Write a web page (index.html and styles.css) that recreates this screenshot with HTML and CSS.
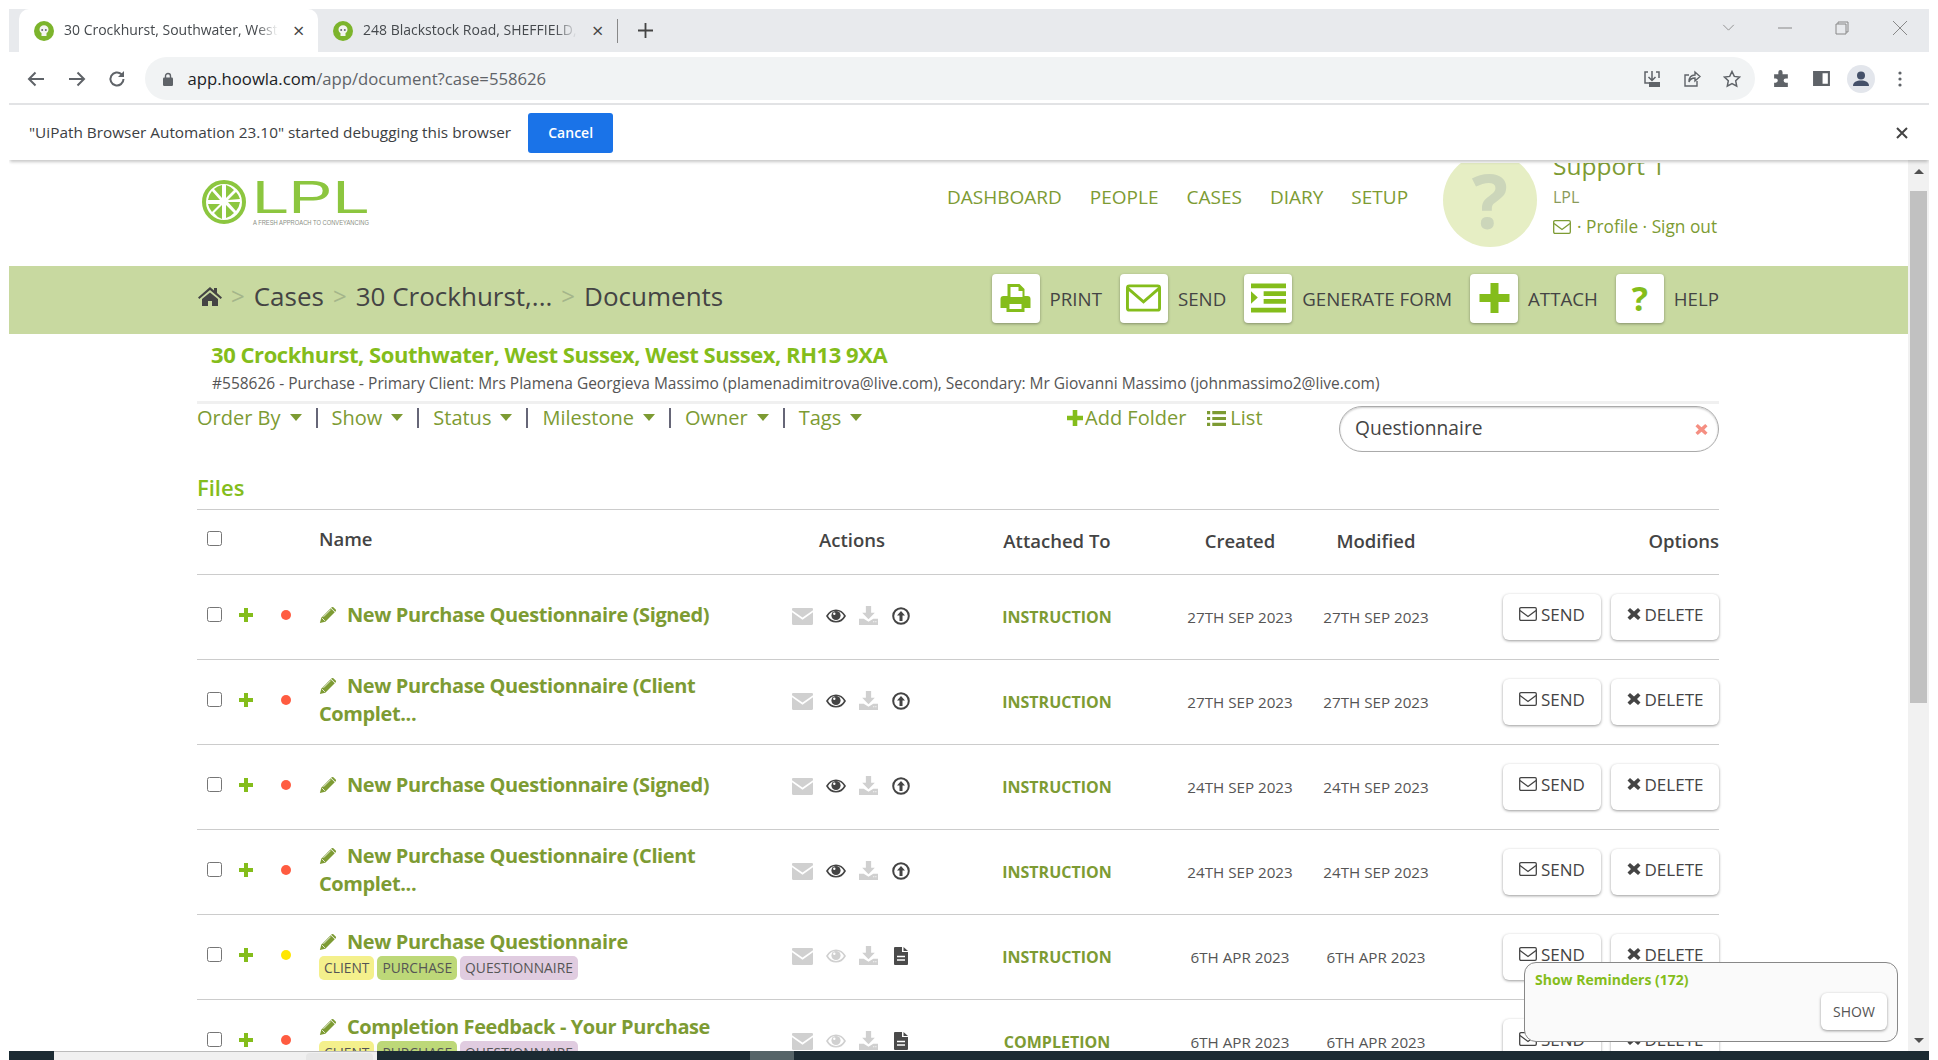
FILE: index.html
```html
<!DOCTYPE html>
<html lang="en">
<head>
<meta charset="utf-8">
<title>Documents</title>
<link rel="stylesheet" href="styles.css">
</head>
<body>
<svg class="defs" width="0" height="0" aria-hidden="true">
  <symbol id="fav" viewBox="0 0 20 20"><circle cx="10" cy="10" r="10" fill="#7cb42c"/><path d="M5.5 8.5a4.5 4.2 0 0 1 9 0c0 2-1 3-2 3.500V15H7.500v-3C6.500 11.500 5.500 10.500 5.500 8.500z" fill="#f4f4f0"/><circle cx="8.200" cy="9" r="1" fill="#667"/><circle cx="11.800" cy="9" r="1" fill="#667"/></symbol>
  <symbol id="pencil" viewBox="0 0 20 20"><path d="M1 19l1.500-6L13 2.500l4.500 4.500L7 17.500z" fill="#7d9b33"/><path d="M14 1.500a1.500 1.500 0 0 1 2 0l2.500 2.500a1.500 1.500 0 0 1 0 2L18 6.500 13.500 2z" fill="#7d9b33"/><path d="M3.500 13.500l3 3M5 12l8-8" stroke="#fff" stroke-width=".9" fill="none"/></symbol>
  <symbol id="plus" viewBox="0 0 14 14"><path d="M5 0h4v5h5v4H9v5H5V9H0V5h5z" fill="#84bd1b"/></symbol>
  <symbol id="mail" viewBox="0 0 20 16"><path d="M1 0h18a1 1 0 0 1 1 1v1l-10 7L0 2V1a1 1 0 0 1 1-1zM0 4l10 7 10-7v11a1 1 0 0 1-1 1H1a1 1 0 0 1-1-1z" fill="#d0d0d0"/></symbol>
  <symbol id="eye" viewBox="0 0 20 14"><path d="M1 7c2-3.500 5.300-5.800 9-5.800S17 3.500 19 7c-2 3.500-5.300 5.800-9 5.800S3 10.500 1 7z" fill="none" stroke="currentColor" stroke-width="1.600"/><circle cx="10" cy="6.500" r="4.600" fill="currentColor"/><circle cx="8.300" cy="4.800" r="1.200" fill="#fff"/></symbol>
  <symbol id="dl" viewBox="0 0 18 18"><path d="M6.500 0h5v6.500H15L9 12.500 3 6.500h3.500zM0 12h4.500L9 15l4.500-3H18v6H0z" fill="#d0d0d0"/><path d="M13.500 15h1M15.500 15h1" stroke="#fff"/></symbol>
  <symbol id="up" viewBox="0 0 18 18"><circle cx="9" cy="9" r="7.800" fill="none" stroke="#444" stroke-width="2"/><path d="M9 4l4 4.500h-2.500V14h-3V8.500H5z" fill="#444"/></symbol>
  <symbol id="file" viewBox="0 0 14 18"><path d="M0 1a1 1 0 0 1 1-1h7v5h6v12a1 1 0 0 1-1 1H1a1 1 0 0 1-1-1zM9.500 0L14 4H9.500z" fill="#4a4a4a"/><path d="M3 9.500h8M3 13h8" stroke="#fff" stroke-width="1.500"/></symbol>
  <symbol id="send-o" viewBox="0 0 18 14"><rect x=".7" y=".7" width="16.600" height="12.600" rx="1.200" fill="none" stroke="currentColor" stroke-width="1.300"/><path d="M1 3.500l8 6 8-6" fill="none" stroke="currentColor" stroke-width="1.300"/></symbol>
  <symbol id="cross" viewBox="0 0 14 14"><path d="M3 1l4 3.500L11 1l2.500 2.500L10 7l3.500 3.500L11 13 7 9.500 3 13 .5 10.500 4 7 .5 3.500z" fill="currentColor"/></symbol>
</svg>

<div class="window">
  <div class="tabstrip">
    <div class="tab tab-active"><svg class="fav"><use href="#fav"/></svg><span class="tab-label">30 Crockhurst, Southwater, West</span><span class="tab-x">×</span></div>
    <div class="tab tab-idle"><svg class="fav"><use href="#fav"/></svg><span class="tab-label">248 Blackstock Road, SHEFFIELD,</span><span class="tab-x">×</span></div>
    <span class="tab-sep"></span>
    <svg class="newtab" viewBox="0 0 14 14"><path d="M7 0v14M0 7h14" stroke="#444" stroke-width="1.700"/></svg>
    <div class="winctl">
      <svg class="wc-chev" viewBox="0 0 14 8"><path d="M1 1l6 6 6-6" fill="none" stroke="#888" stroke-width="1"/></svg>
      <svg class="wc-min" viewBox="0 0 14 2"><path d="M0 1h14" stroke="#888"/></svg>
      <svg class="wc-max" viewBox="0 0 14 14"><path d="M3 3V1h10v10h-2M1 3h10v10H1z" fill="none" stroke="#888"/></svg>
      <svg class="wc-close" viewBox="0 0 14 14"><path d="M0 0l14 14M14 0L0 14" stroke="#888"/></svg>
    </div>
  </div>

  <div class="toolbar">
    <svg class="nav-ico" viewBox="0 0 18 18"><path d="M17 9H2M8.500 2.500L2 9l6.500 6.500" fill="none" stroke="#5f6368" stroke-width="2"/></svg>
    <svg class="nav-ico" viewBox="0 0 18 18"><path d="M1 9h15M9.500 2.500L16 9l-6.500 6.500" fill="none" stroke="#5f6368" stroke-width="2"/></svg>
    <svg class="nav-ico" viewBox="0 0 18 18"><path d="M15.500 9a6.500 6.500 0 1 1-2-4.700" fill="none" stroke="#5f6368" stroke-width="2"/><path d="M16 1v6h-6z" fill="#5f6368"/></svg>
    <div class="omnibox">
      <svg class="lock" viewBox="0 0 10 14"><path d="M2.500 6V4a2.500 2.500 0 0 1 5 0v2" fill="none" stroke="#5f6368" stroke-width="1.400"/><rect y="5.500" width="10" height="8.500" rx="1.200" fill="#5f6368"/></svg>
      <span class="url"><b>app.hoowla.com</b>/app/document?case=558626</span>
      <svg class="omni-ico omni-first" viewBox="0 0 18 18"><path d="M5 2H2v11h5M13 2h3v6M9 1v9M5.500 7L9 10.500 12.500 7" fill="none" stroke="#5f6368" stroke-width="1.500"/><rect x="6" y="12" width="11" height="5" fill="#5f6368"/></svg>
      <svg class="omni-ico" viewBox="0 0 18 18"><path d="M14 11v5H2V5h4M6 12c0-5 3-7 6-7V2l5 4.500L12 11V8c-3 0-5 1-6 4z" fill="none" stroke="#5f6368" stroke-width="1.400"/></svg>
      <svg class="omni-ico" viewBox="0 0 18 18"><path d="M9 1.500l2.300 4.900 5.200.7-3.800 3.700 1 5.300L9 13.500l-4.700 2.600 1-5.300L1.500 7.100l5.200-.7z" fill="none" stroke="#5f6368" stroke-width="1.500"/></svg>
    </div>
    <div class="ext">
      <svg class="ext-ico" viewBox="0 0 18 18"><path d="M2 5h4V3a2 2 0 0 1 4 0v2h5v4h-2a2 2 0 0 0 0 4h2v4H2v-4h1.500a2 2 0 0 0 0-4H2z" fill="#5f6368"/></svg>
      <svg class="ext-ico" viewBox="0 0 18 18"><path d="M1 2h16v14H1zM10 4v10h5V4z" fill="#5f6368" fill-rule="evenodd"/></svg>
      <svg class="profile-ico" viewBox="0 0 28 28"><circle cx="14" cy="14" r="14" fill="#e3e6ec"/><circle cx="14" cy="10.500" r="4" fill="#445069"/><path d="M6 21c0-4 3.500-5.500 8-5.500s8 1.500 8 5.500z" fill="#445069"/></svg>
      <svg class="kebab" viewBox="0 0 4 16"><circle cx="2" cy="2" r="1.600" fill="#5f6368"/><circle cx="2" cy="8" r="1.600" fill="#5f6368"/><circle cx="2" cy="14" r="1.600" fill="#5f6368"/></svg>
    </div>
  </div>

  <div class="infobar">
    <span class="info-text">"UiPath Browser Automation 23.10" started debugging this browser</span>
    <span class="info-btn">Cancel</span>
    <svg class="info-x" viewBox="0 0 12 12"><path d="M1 1l10 10M11 1L1 11" stroke="#444" stroke-width="2"/></svg>
  </div>

  <div class="viewport">
    <div class="page">
      <header class="site-head">
        <div class="container head-row">
          <svg class="logo" viewBox="0 0 175 56">
            <circle cx="25" cy="26" r="20" fill="#fff" stroke="#8cc63f" stroke-width="4"/>
            <g fill="#8cc63f">
              <path d="M27 9l0 13 8-8a17 17 0 0 0-8-5zM37 16l-8 8 12-1a17 17 0 0 0-4-7zM41 26l-12 0 8 9a17 17 0 0 0 4-9zM35 37l-8-8v13a17 17 0 0 0 8-5zM23 43V29l-8 8a17 17 0 0 0 8 6zM13 36l8-8H9a17 17 0 0 0 4 8zM9 24h12l-8-9a17 17 0 0 0-4 9zM15 13l8 9V9a17 17 0 0 0-8 4z"/>
            </g>
            <text x="53" y="37" class="logo-word" textLength="117" lengthAdjust="spacingAndGlyphs">LPL</text>
            <text x="54" y="49" class="logo-tag" textLength="116" lengthAdjust="spacingAndGlyphs">A FRESH APPROACH TO CONVEYANCING</text>
          </svg>
          <nav class="main-nav"><a>DASHBOARD</a><a>PEOPLE</a><a>CASES</a><a>DIARY</a><a>SETUP</a></nav>
          <div class="avatar">?</div>
          <div class="profile">
            <div class="profile-name">Support 1</div>
            <div class="profile-org">LPL</div>
            <div class="profile-links"><svg class="prof-mail"><use href="#send-o"/></svg> · Profile · Sign out</div>
          </div>
        </div>
      </header>

      <div class="band">
        <div class="container band-row">
          <div class="crumbs">
            <svg class="home" viewBox="0 0 24 20"><path d="M12 1l4 3.500V2h3v5l5 4.500-1.300 1.500L12 4 1.300 13 0 11.500zM4 13l8-6.500 8 6.500v7h-6v-5h-4v5H4z" fill="#444"/></svg>
            <span class="crumb-sep">&gt;</span><span>Cases</span><span class="crumb-sep">&gt;</span><span>30 Crockhurst,...</span><span class="crumb-sep">&gt;</span><span>Documents</span>
          </div>
          <div class="tools">
            <span class="tool"><span class="tool-btn"><svg viewBox="0 0 30 30"><path d="M7 1h12l5 5v7h3a3 3 0 0 1 3 3v9h-6v4H6v-4H0v-9a3 3 0 0 1 3-3h4z" fill="#84bd1b"/><path d="M10 4h8v4h4v6H10zM9 21h12v5H9z" fill="#fff"/></svg></span>PRINT</span>
            <span class="tool"><span class="tool-btn"><svg viewBox="0 0 36 28"><rect x="1.500" y="1.500" width="33" height="25" rx="2" fill="none" stroke="#84bd1b" stroke-width="3"/><path d="M2 4l16 14L34 4" fill="none" stroke="#84bd1b" stroke-width="3"/></svg></span>SEND</span>
            <span class="tool"><span class="tool-btn"><svg viewBox="0 0 36 30"><path d="M0 0h36v5H0zM13 8h23v5H13zM13 16h23v5H13zM0 25h36v5H0zM0 8l7 6.500L0 21z" fill="#84bd1b"/></svg></span>GENERATE FORM</span>
            <span class="tool"><span class="tool-btn"><svg viewBox="0 0 30 30"><path d="M11 0h8v11h11v8H19v11h-8V19H0v-8h11z" fill="#84bd1b"/></svg></span>ATTACH</span>
            <span class="tool"><span class="tool-btn tool-help">?</span>HELP</span>
          </div>
        </div>
      </div>

      <div class="case-head">
        <h1 class="case-title">30 Crockhurst, Southwater, West Sussex, West Sussex, RH13 9XA</h1>
        <p class="case-sub">#558626 - Purchase - Primary Client: Mrs Plamena Georgieva Massimo (plamenadimitrova@live.com), Secondary: Mr Giovanni Massimo (johnmassimo2@live.com)</p>
      </div>

      <div class="container">
        <div class="filters">
          <div class="filter-list">
            <a>Order By<i class="caret"></i></a><span class="pipe"></span>
            <a>Show<i class="caret"></i></a><span class="pipe"></span>
            <a>Status<i class="caret"></i></a><span class="pipe"></span>
            <a>Milestone<i class="caret"></i></a><span class="pipe"></span>
            <a>Owner<i class="caret"></i></a><span class="pipe"></span>
            <a>Tags<i class="caret"></i></a>
          </div>
          <div class="filter-actions">
            <a><svg class="fa-plus"><use href="#plus"/></svg>Add Folder</a>
            <a><svg class="fa-list" viewBox="0 0 18 14"><path d="M0 0h3v3H0zM5 0h13v3H5zM0 5.500h3v3H0zM5 5.500h13v3H5zM0 11h3v3H0zM5 11h13v3H5z" fill="#7d9b33"/></svg>List</a>
          </div>
          <div class="search"><span class="search-text">Questionnaire</span><svg class="search-x"><use href="#cross"/></svg></div>
        </div>

        <h2 class="files-title">Files</h2>

        <div class="row row-head">
          <div class="c-sel"><span class="check"></span></div>
          <div class="c-name">Name</div>
          <div class="c-act">Actions</div>
          <div class="c-att">Attached To</div>
          <div class="c-date">Created</div>
          <div class="c-date">Modified</div>
          <div class="c-opt">Options</div>
        </div>

        <div class="row">
          <div class="c-sel"><span class="check"></span><svg class="r-plus"><use href="#plus"/></svg><span class="dot dot-red"></span></div>
          <div class="c-name"><div class="doc"><svg class="pen"><use href="#pencil"/></svg>New Purchase Questionnaire (Signed)</div></div>
          <div class="c-act"><svg class="a-mail"><use href="#mail"/></svg><svg class="a-eye"><use href="#eye"/></svg><svg class="a-dl"><use href="#dl"/></svg><svg class="a-up"><use href="#up"/></svg></div>
          <div class="c-att">INSTRUCTION</div>
          <div class="c-date">27TH SEP 2023</div>
          <div class="c-date">27TH SEP 2023</div>
          <div class="c-opt"><span class="btn btn-send"><svg><use href="#send-o"/></svg>SEND</span><span class="btn btn-del"><svg><use href="#cross"/></svg>DELETE</span></div>
        </div>

        <div class="row">
          <div class="c-sel"><span class="check"></span><svg class="r-plus"><use href="#plus"/></svg><span class="dot dot-red"></span></div>
          <div class="c-name"><div class="doc"><svg class="pen"><use href="#pencil"/></svg>New Purchase Questionnaire (Client Complet...</div></div>
          <div class="c-act"><svg class="a-mail"><use href="#mail"/></svg><svg class="a-eye"><use href="#eye"/></svg><svg class="a-dl"><use href="#dl"/></svg><svg class="a-up"><use href="#up"/></svg></div>
          <div class="c-att">INSTRUCTION</div>
          <div class="c-date">27TH SEP 2023</div>
          <div class="c-date">27TH SEP 2023</div>
          <div class="c-opt"><span class="btn btn-send"><svg><use href="#send-o"/></svg>SEND</span><span class="btn btn-del"><svg><use href="#cross"/></svg>DELETE</span></div>
        </div>

        <div class="row">
          <div class="c-sel"><span class="check"></span><svg class="r-plus"><use href="#plus"/></svg><span class="dot dot-red"></span></div>
          <div class="c-name"><div class="doc"><svg class="pen"><use href="#pencil"/></svg>New Purchase Questionnaire (Signed)</div></div>
          <div class="c-act"><svg class="a-mail"><use href="#mail"/></svg><svg class="a-eye"><use href="#eye"/></svg><svg class="a-dl"><use href="#dl"/></svg><svg class="a-up"><use href="#up"/></svg></div>
          <div class="c-att">INSTRUCTION</div>
          <div class="c-date">24TH SEP 2023</div>
          <div class="c-date">24TH SEP 2023</div>
          <div class="c-opt"><span class="btn btn-send"><svg><use href="#send-o"/></svg>SEND</span><span class="btn btn-del"><svg><use href="#cross"/></svg>DELETE</span></div>
        </div>

        <div class="row">
          <div class="c-sel"><span class="check"></span><svg class="r-plus"><use href="#plus"/></svg><span class="dot dot-red"></span></div>
          <div class="c-name"><div class="doc"><svg class="pen"><use href="#pencil"/></svg>New Purchase Questionnaire (Client Complet...</div></div>
          <div class="c-act"><svg class="a-mail"><use href="#mail"/></svg><svg class="a-eye"><use href="#eye"/></svg><svg class="a-dl"><use href="#dl"/></svg><svg class="a-up"><use href="#up"/></svg></div>
          <div class="c-att">INSTRUCTION</div>
          <div class="c-date">24TH SEP 2023</div>
          <div class="c-date">24TH SEP 2023</div>
          <div class="c-opt"><span class="btn btn-send"><svg><use href="#send-o"/></svg>SEND</span><span class="btn btn-del"><svg><use href="#cross"/></svg>DELETE</span></div>
        </div>

        <div class="row">
          <div class="c-sel"><span class="check"></span><svg class="r-plus"><use href="#plus"/></svg><span class="dot dot-yellow"></span></div>
          <div class="c-name"><div class="doc"><svg class="pen"><use href="#pencil"/></svg>New Purchase Questionnaire</div><div class="tags"><span class="tag tag-y">CLIENT</span><span class="tag tag-g">PURCHASE</span><span class="tag tag-p">QUESTIONNAIRE</span></div></div>
          <div class="c-act"><svg class="a-mail"><use href="#mail"/></svg><svg class="a-eye faded"><use href="#eye"/></svg><svg class="a-dl"><use href="#dl"/></svg><svg class="a-file"><use href="#file"/></svg></div>
          <div class="c-att">INSTRUCTION</div>
          <div class="c-date">6TH APR 2023</div>
          <div class="c-date">6TH APR 2023</div>
          <div class="c-opt"><span class="btn btn-send"><svg><use href="#send-o"/></svg>SEND</span><span class="btn btn-del"><svg><use href="#cross"/></svg>DELETE</span></div>
        </div>

        <div class="row">
          <div class="c-sel"><span class="check"></span><svg class="r-plus"><use href="#plus"/></svg><span class="dot dot-red"></span></div>
          <div class="c-name"><div class="doc"><svg class="pen"><use href="#pencil"/></svg>Completion Feedback - Your Purchase</div><div class="tags"><span class="tag tag-y">CLIENT</span><span class="tag tag-g">PURCHASE</span><span class="tag tag-p">QUESTIONNAIRE</span></div></div>
          <div class="c-act"><svg class="a-mail"><use href="#mail"/></svg><svg class="a-eye faded"><use href="#eye"/></svg><svg class="a-dl"><use href="#dl"/></svg><svg class="a-file"><use href="#file"/></svg></div>
          <div class="c-att">COMPLETION</div>
          <div class="c-date">6TH APR 2023</div>
          <div class="c-date">6TH APR 2023</div>
          <div class="c-opt"><span class="btn btn-send"><svg><use href="#send-o"/></svg>SEND</span><span class="btn btn-del"><svg><use href="#cross"/></svg>DELETE</span></div>
        </div>
      </div>
    </div>

    <div class="scrollbar">
      <i class="sb-up"></i>
      <div class="sb-thumb"></div>
      <i class="sb-down"></i>
    </div>

    <div class="reminders">
      <div class="rem-title">Show Reminders (172)</div>
      <span class="rem-btn">SHOW</span>
    </div>
  </div>

  <div class="taskbar">
    <div class="task-search"><span class="task-btn"></span></div>
    <div class="task-active"></div>
  </div>
</div>
</body>
</html>
```

FILE: styles.css
```css
* { box-sizing: border-box; }
html, body { margin: 0; padding: 0; height: 100%; overflow: hidden; background: #fff; }
body { font-family: "Open Sans", "Noto Sans", sans-serif; color: #444; }
.defs { position: absolute; }
a { color: inherit; text-decoration: none; }

.window { width: 1920px; height: 1060px; margin: 0 0 0 9px; padding-top: 9px; display: flex; flex-direction: column; }

/* browser chrome */
.tabstrip { height: 43px; flex: none; background: #e8eaed; display: flex; align-items: flex-end; padding-left: 10px; position: relative; }
.tab { height: 43px; display: flex; align-items: center; font-size: 14px; color: #45494d; white-space: nowrap; }
.tab-active { width: 299px; background: #fff; border-radius: 10px 10px 0 0; padding-left: 15px; }
.tab-idle { width: 300px; padding-left: 15px; height: 43px; }
.fav { width: 20px; height: 20px; flex: none; }
.tab-label { width: 214px; margin-left: 10px; margin-bottom: 2px; overflow: hidden; -webkit-mask-image: linear-gradient(to right, #000 90%, transparent); mask-image: linear-gradient(to right, #000 90%, transparent); }
.tab-x { font-size: 20px; margin-left: 15px; line-height: 1; color: #444; }
.tab-sep { width: 1px; height: 24px; background: #888; margin-bottom: 9px; margin-left: -1px; }
.newtab { width: 15px; height: 15px; margin: 0 0 14px 20px; }
.winctl { margin-left: auto; height: 43px; display: flex; align-items: center; padding-right: 22px; padding-bottom: 6px; }
.wc-chev { width: 13px; height: 7px; margin-right: 43px; }
.wc-min { width: 14px; height: 2px; margin-right: 43px; }
.wc-max { width: 14px; height: 14px; margin-right: 44px; }
.wc-close { width: 14px; height: 14px; }

.toolbar { height: 53px; flex: none; display: flex; align-items: center; background: #fff; border-bottom: 2px solid #e2e3e5; padding: 2px 0 0 18px; }
.nav-ico { width: 18px; height: 18px; margin-right: 22.500px; flex: none; }
.omnibox { width: 1610px; height: 43px; margin-left: -4px; background: #f1f3f4; border-radius: 22px; display: flex; align-items: center; padding-left: 18px; padding-right: 14px; }
.lock { width: 10px; height: 14px; }
.url { font-size: 16.700px; color: #5f6368; margin-left: 15px; }
.url b { font-weight: 400; color: #202124; }
.omni-ico { width: 18px; height: 18px; margin-left: 22px; }
.omni-first { margin-left: auto; }
.ext { display: flex; align-items: center; margin-left: 17.500px; }
.ext-ico { width: 19px; height: 19px; margin-right: 21px; }
.profile-ico { width: 28px; height: 28px; margin-right: 23px; margin-left: -5px; }
.kebab { width: 4px; height: 16px; }

.infobar { height: 55px; flex: none; display: flex; align-items: center; padding-left: 20px; padding-right: 21px; background: #fff; box-shadow: 0 3px 3px -1px rgba(0,0,0,.22); position: relative; z-index: 2; clip-path: inset(0 0 -6px 0); }
.info-text { font-size: 15.350px; color: #3c4043; white-space: nowrap; margin-bottom: 2px; }
.info-btn { margin-left: 17px; width: 85px; height: 40px; background: #1a73e8; color: #fff; border-radius: 3px; font-size: 14px; font-weight: 600; display: flex; align-items: center; justify-content: center; }
.info-x { width: 12px; height: 12px; margin-left: auto; }

.viewport { height: 891px; flex: none; display: flex; position: relative; overflow: hidden; }
.page { width: 1899px; flex: none; overflow: hidden; height: 891px; padding-top: 3px; }
.container { width: 1522px; margin-left: 188px; }

/* site header */
.site-head { height: 103px; overflow: hidden; }
.head-row { display: flex; align-items: flex-start; height: 103px; }
.logo { width: 175px; height: 56px; margin: 13px 0 0 2px; flex: none; overflow: visible; }
.logo-word { font-family: "Liberation Sans", sans-serif; font-size: 47px; fill: #8cc63f; }
.logo-tag { font-family: "Liberation Sans", sans-serif; font-size: 7.500px; fill: #8b8f85; }
.main-nav { margin-left: 573px; width: 496px; display: flex; gap: 28px; margin-top: 21px; font-size: 19px; line-height: 26px; color: #7d9b33; white-space: nowrap; }
.avatar { width: 94px; height: 94px; flex: none; margin-top: -10px; border-radius: 50%; background: #e6eec4; color: #ccd6ba; font-size: 76px; font-weight: 700; line-height: 94px; text-align: center; }
.profile { margin-left: 16px; color: #7d9b33; white-space: nowrap; }
.profile-name { font-size: 24.500px; line-height: 30px; margin-top: -12px; }
.profile-org { font-size: 16px; line-height: 26px; margin-top: 3px; color: #8a9a5a; }
.profile-links { font-size: 17.300px; line-height: 24px; margin-top: 5px; display: flex; gap: 4px; align-items: center; }
.prof-mail { width: 18px; height: 14px; color: #7d9b33; margin-right: 2px; }

/* green band */
.band { height: 68px; background: #c8d9a0; }
.band-row { display: flex; align-items: center; height: 68px; }
.crumbs { display: flex; align-items: center; font-size: 26px; color: #444; white-space: nowrap; margin-bottom: 9px; }
.home { width: 24px; height: 20px; margin-right: 9px; margin-left: 1px; }
.crumb-sep { color: #a4b58a; margin-right: 9px; font-size: 24px; }
.crumbs span:not(.crumb-sep) { margin-right: 9px; }
.tools { margin-left: auto; display: flex; align-items: center; font-size: 18.700px; color: #444; white-space: nowrap; margin-bottom: 4px; }
.tool { display: flex; align-items: center; margin-left: 18px; }
.tool-btn { width: 48px; height: 49px; background: #fff; border-radius: 4px; box-shadow: 0 1px 3px rgba(0,0,0,.35); display: flex; align-items: center; justify-content: center; margin-right: 10px; }
.tool-btn svg { width: 35px; height: 30px; }
.tool-help { font-size: 34px; font-weight: 700; color: #84bd1b; }

/* case header */
.case-head { height: 67px; padding: 5px 0 0 202px; }
.case-title { margin: 0; font-size: 22px; line-height: 30px; font-weight: 700; letter-spacing: -.45px; color: #84bd1b; white-space: nowrap; }
.case-sub { margin: 3px 0 0 1px; font-size: 15.500px; line-height: 22px; color: #555; white-space: nowrap; }

/* filters */
.filters { display: flex; align-items: flex-start; height: 75px; border-top: 3px solid #f0f0f0; position: relative; }
.filter-list { display: flex; align-items: center; font-size: 20px; line-height: 28px; color: #7d9b33; white-space: nowrap; }
.caret { display: inline-block; width: 0; height: 0; border: 6px solid transparent; border-top: 7px solid #7d9b33; border-bottom: 0; margin-left: 9px; vertical-align: middle; position: relative; top: -2px; }
.pipe { display: inline-block; width: 2px; height: 20px; background: #667; margin: 0 14px; }
.filter-actions { position: absolute; left: 870px; top: 0; display: flex; gap: 21px; font-size: 20px; line-height: 28px; color: #7d9b33; white-space: nowrap; }
.filter-actions a { display: flex; align-items: center; }
.fa-plus { width: 16px; height: 16px; margin-right: 2px; }
.fa-list { width: 19px; height: 15px; margin-right: 4px; }
.search { position: absolute; right: 0; top: 2px; width: 380px; height: 46px; border: 1px solid #aaa; border-radius: 23px; padding: 0 10px 0 15px; display: flex; align-items: center; justify-content: space-between; font-size: 19.200px; color: #444; box-shadow: inset 0 1px 2px rgba(0,0,0,.2); }
.search-text { margin-bottom: 3px; }
.search-x { width: 13px; height: 13px; color: #f58f82; }

.files-title { margin: 0; height: 33px; font-size: 22px; line-height: 23px; font-weight: 600; color: #84bd1b; }

/* rows */
.row { display: grid; grid-template-columns: 122px 466px 215px 172px 136px 136px 275px; height: 85px; align-items: center; border-bottom: 1px solid #ccc; }
.row-head { height: 66px; border-top: 1px solid #ccc; font-size: 18.500px; font-weight: 600; color: #444; padding-bottom: 3px; }
.row-head .c-act { display: block; padding-left: 34px; }
.row-head .c-att, .row-head .c-date { font-size: 18.500px; font-weight: 600; color: #444; }
.row-head .c-opt { font-weight: 600; }
.c-sel { display: flex; align-items: center; padding-left: 10px; margin-bottom: 5px; }
.check { width: 15px; height: 15px; border: 1px solid #767676; border-radius: 2.500px; background: #fff; flex: none; }
.r-plus { width: 14px; height: 14px; margin-left: 17px; flex: none; }
.dot { width: 10px; height: 10px; border-radius: 50%; margin-left: 28px; flex: none; }
.dot-red { background: #ff5c40; }
.dot-yellow { background: #ffe600; }
.c-name { margin-bottom: 4px; }
.doc { font-size: 20px; line-height: 28px; font-weight: 700; letter-spacing: -.39px; color: #7d9b33; padding-right: 30px; }
.pen { width: 18px; height: 18px; margin-right: 10px; vertical-align: -2px; }
.tags { display: flex; gap: 3px; margin-bottom: 2px; }
.tag { height: 24px; border-radius: 5px; font-size: 13.800px; line-height: 24px; padding: 0 5px; color: #555; white-space: nowrap; }
.tag-y { background: #f4f08c; }
.tag-g { background: #bdd878; }
.tag-p { background: #e0cce0; }
.c-act { display: flex; align-items: center; margin-bottom: 2px; }
.a-mail { width: 21px; height: 17px; margin-left: 7px; }
.a-eye { width: 20px; height: 14px; margin-left: 13px; color: #444; }
.a-eye.faded { color: #d0d0d0; }
.a-dl { width: 19px; height: 19px; margin-left: 13px; margin-bottom: 2px; }
.a-up { width: 18px; height: 18px; margin-left: 14px; }
.a-file { width: 14px; height: 18px; margin-left: 16px; }
.c-att { font-size: 16px; font-weight: 700; color: #7d9b33; text-align: center; padding-right: 58px; }
.c-date { font-size: 15.200px; color: #555; text-align: center; white-space: nowrap; }
.c-opt { display: flex; justify-content: flex-end; gap: 10px; font-size: 18.500px; }
.btn { height: 46px; border-radius: 6px; background: #fff; box-shadow: 0 1px 3px rgba(0,0,0,.4); display: flex; align-items: center; justify-content: center; font-size: 17px; color: #444; padding-bottom: 6px; }
.btn-send { width: 98px; }
.btn-del { width: 108px; }
.btn svg { flex: none; margin-right: 4px; }
.btn-send svg { width: 18px; height: 14px; }
.btn-del svg { width: 14px; height: 14px; }

/* scrollbar */
.scrollbar { width: 21px; background: #f1f1f1; display: flex; flex-direction: column; align-items: center; height: 891px; position: relative; }
.sb-up, .sb-down { width: 0; height: 0; border: 5px solid transparent; position: absolute; }
.sb-up { top: 9px; border-bottom: 5px solid #505050; border-top: 0; }
.sb-down { bottom: 8px; border-top: 5px solid #505050; border-bottom: 0; }
.sb-thumb { width: 17px; height: 512px; margin-top: 31px; background: #c1c1c1; }

/* reminders */
.reminders { position: absolute; left: 1515px; top: 802px; width: 374px; height: 80px; background: #fafafa; border: 1px solid #888; border-radius: 12px; padding: 7px 10px; }
.rem-title { font-size: 14px; line-height: 20px; font-weight: 700; color: #84bd1b; }
.rem-btn { position: absolute; right: 10px; top: 30px; width: 66px; height: 37px; background: #fff; border-radius: 6px; box-shadow: 0 1px 3px rgba(0,0,0,.4); font-size: 14px; color: #555; display: flex; align-items: center; justify-content: center; }

/* taskbar */
.taskbar { height: 9px; flex: none; background: #1c2b33; display: flex; position: relative; z-index: 3; }
.task-search { width: 323px; margin-left: 45px; height: 9px; background: #f0f0f0; border-top: 1px solid #bbb; position: relative; }
.task-btn { position: absolute; left: 252px; top: 1px; width: 67px; height: 8px; background: #e6e6e6; border-radius: 4px 4px 0 0; }
.task-active { width: 44px; margin-left: 373px; background: #566468; }
```
